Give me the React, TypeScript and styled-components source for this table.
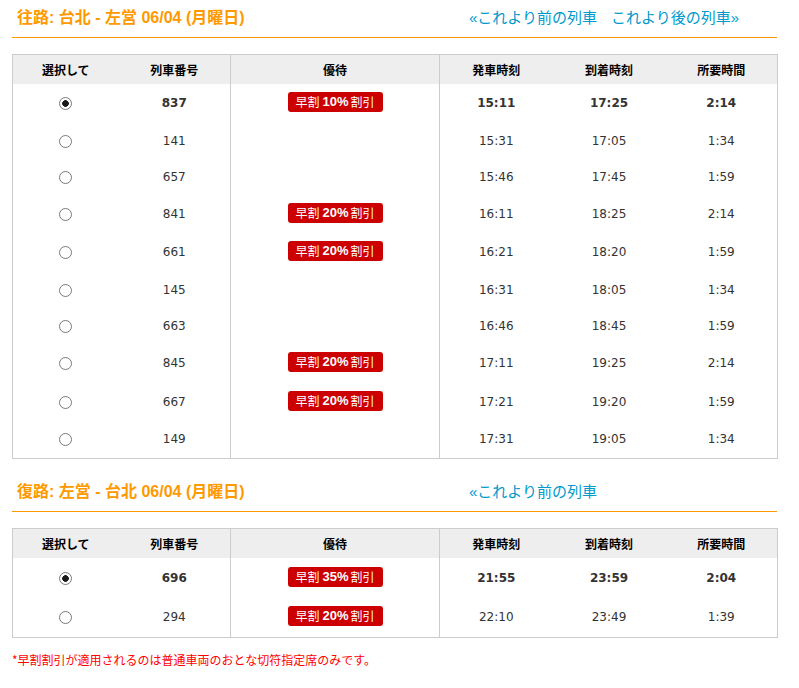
import React from "react";
import styled, { createGlobalStyle } from "styled-components";

const Global = createGlobalStyle`
  html, body { margin: 0; padding: 0; background: #fff; }
  body { font-family: "DejaVu Sans", "Noto Sans CJK JP", sans-serif; color: #333; }
`;

const Page = styled.div`
  width: 765px;
  padding: 8px 0 0 12px;
`;

const Section = styled.section<{ $gap?: number }>`
  margin-top: ${(p) => p.$gap ?? 0}px;
`;

const TitleBar = styled.div`
  display: grid;
  grid-template-columns: 457px 1fr;
  align-items: start;
  height: 29px;
  border-bottom: 1px solid #f90;
  line-height: 20px;
`;

const Title = styled.h2`
  margin: 0;
  padding-left: 5px;
  font: bold 16px/20px "Liberation Sans", "Noto Sans CJK JP", sans-serif;
  color: #f90;
`;

const Links = styled.div`
  display: flex;
  font: 15px/20px "Liberation Sans", "Noto Sans CJK JP", sans-serif;
`;

const NavLink = styled.a<{ $spaced?: boolean }>`
  color: #0099cc;
  text-decoration: none;
  margin-left: ${(p) => (p.$spaced ? 14 : 0)}px;
`;

const Table = styled.table`
  width: 765px;
  table-layout: fixed;
  border-collapse: collapse;
  border: 1px solid #ccc;
  margin-top: 16px;
`;

const Th = styled.th<{ $divider?: boolean }>`
  height: 29px;
  padding: 0;
  background: #eee;
  font: bold 12px "Noto Sans CJK JP", sans-serif;
  color: #000;
  text-align: center;
  border-left: ${(p) => (p.$divider ? "1px solid #ccc" : "none")};
`;

const Row = styled.tr<{ $h: number; $bold?: boolean }>`
  height: ${(p) => p.$h}px;
  font-weight: ${(p) => (p.$bold ? "bold" : "normal")};
`;

const Td = styled.td<{ $divider?: boolean }>`
  padding: 0;
  text-align: center;
  vertical-align: middle;
  font-size: 12px;
  font-family: "DejaVu Sans", "Noto Sans CJK JP", sans-serif;
  color: #333;
  border-left: ${(p) => (p.$divider ? "1px solid #ccc" : "none")};
`;

const Radio = styled.input.attrs({ type: "radio" })`
  appearance: none;
  margin: 0;
  width: 13px;
  height: 13px;
  border: 1px solid #7a7a7a;
  border-radius: 50%;
  background: #fff;
  display: inline-block;
  vertical-align: middle;
  box-sizing: border-box;
  &:checked {
    background: radial-gradient(circle, #1a1a1a 0 3px, #fff 3.6px);
  }
`;

const Badge = styled.span`
  display: inline-flex;
  align-items: center;
  justify-content: center;
  width: 95px;
  height: 20px;
  margin-bottom: 2px;
  background: #cc0000;
  color: #fff;
  border-radius: 3px;
  font: normal 12px/20px "Noto Sans CJK JP", sans-serif;
  vertical-align: middle;
`;

const Pct = styled.b`
  font: bold 13px/20px "Liberation Sans", sans-serif;
  margin: 0 2px 0 3px;
`;

const Note = styled.p`
  margin: 14px 0 0;
  font: 12px/16px "Noto Sans CJK JP", sans-serif;
  color: #f00;
`;

type Train = {
  no: string;
  off?: string;
  dep: string;
  arr: string;
  dur: string;
  h: number;
};

const outbound: Train[] = [
  { no: "837", off: "10%", dep: "15:11", arr: "17:25", dur: "2:14", h: 38 },
  { no: "141", dep: "15:31", arr: "17:05", dur: "1:34", h: 37 },
  { no: "657", dep: "15:46", arr: "17:45", dur: "1:59", h: 36 },
  { no: "841", off: "20%", dep: "16:11", arr: "18:25", dur: "2:14", h: 38 },
  { no: "661", off: "20%", dep: "16:21", arr: "18:20", dur: "1:59", h: 38 },
  { no: "145", dep: "16:31", arr: "18:05", dur: "1:34", h: 37 },
  { no: "663", dep: "16:46", arr: "18:45", dur: "1:59", h: 36 },
  { no: "845", off: "20%", dep: "17:11", arr: "19:25", dur: "2:14", h: 38 },
  { no: "667", off: "20%", dep: "17:21", arr: "19:20", dur: "1:59", h: 39 },
  { no: "149", dep: "17:31", arr: "19:05", dur: "1:34", h: 37 },
];

const inbound: Train[] = [
  { no: "696", off: "35%", dep: "21:55", arr: "23:59", dur: "2:04", h: 40 },
  { no: "294", off: "20%", dep: "22:10", arr: "23:49", dur: "1:39", h: 40 },
];

function TrainTable({ rows, name }: { rows: Train[]; name: string }) {
  return (
    <Table>
      <colgroup>
        <col style={{ width: 106 }} />
        <col style={{ width: 112 }} />
        <col style={{ width: 209 }} />
        <col style={{ width: 113 }} />
        <col style={{ width: 113 }} />
        <col style={{ width: 112 }} />
      </colgroup>
      <thead>
        <tr>
          <Th>選択して</Th>
          <Th>列車番号</Th>
          <Th $divider>優待</Th>
          <Th $divider>発車時刻</Th>
          <Th>到着時刻</Th>
          <Th>所要時間</Th>
        </tr>
      </thead>
      <tbody>
        {rows.map((r, i) => (
          <Row key={r.no} $h={r.h} $bold={i === 0}>
            <Td>
              <Radio name={name} defaultChecked={i === 0} />
            </Td>
            <Td>{r.no}</Td>
            <Td $divider>
              {r.off && (
                <Badge>
                  早割<Pct>{r.off}</Pct>割引
                </Badge>
              )}
            </Td>
            <Td $divider>{r.dep}</Td>
            <Td>{r.arr}</Td>
            <Td>{r.dur}</Td>
          </Row>
        ))}
      </tbody>
    </Table>
  );
}

export default function App() {
  return (
    <>
      <Global />
      <Page>
        <Section>
          <TitleBar>
            <Title>往路: 台北 - 左営 06/04 (月曜日)</Title>
            <Links>
              <NavLink href="#">«これより前の列車</NavLink>
              <NavLink href="#" $spaced>
                これより後の列車»
              </NavLink>
            </Links>
          </TitleBar>
          <TrainTable rows={outbound} name="out" />
        </Section>
        <Section $gap={23}>
          <TitleBar>
            <Title>復路: 左営 - 台北 06/04 (月曜日)</Title>
            <Links>
              <NavLink href="#">«これより前の列車</NavLink>
            </Links>
          </TitleBar>
          <TrainTable rows={inbound} name="back" />
        </Section>
        <Note>*早割割引が適用されるのは普通車両のおとな切符指定席のみです。</Note>
      </Page>
    </>
  );
}
